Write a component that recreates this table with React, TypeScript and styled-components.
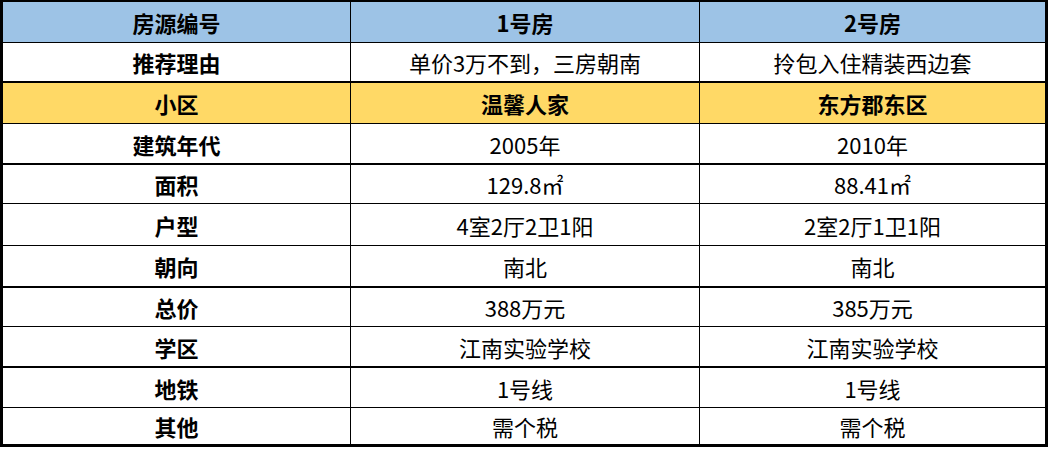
import * as React from "react";
import styled, { createGlobalStyle } from "styled-components";

type RowData = {
  cells: [string, string, string];
  height: number;
  line: number;
  tone?: "blue" | "yellow";
  bold?: boolean;
};

const rows: RowData[] = [
  { cells: ["房源编号", "1号房", "2号房"], height: 41, line: 1, tone: "blue", bold: true },
  { cells: ["推荐理由", "单价3万不到，三房朝南", "拎包入住精装西边套"], height: 40, line: 2 },
  { cells: ["小区", "温馨人家", "东方郡东区"], height: 41, line: 1, tone: "yellow", bold: true },
  { cells: ["建筑年代", "2005年", "2010年"], height: 41, line: 2 },
  { cells: ["面积", "129.8㎡", "88.41㎡"], height: 39, line: 1 },
  { cells: ["户型", "4室2厅2卫1阳", "2室2厅1卫1阳"], height: 42, line: 1 },
  { cells: ["朝向", "南北", "南北"], height: 42, line: 2 },
  { cells: ["总价", "388万元", "385万元"], height: 39, line: 1 },
  { cells: ["学区", "江南实验学校", "江南实验学校"], height: 41, line: 2 },
  { cells: ["地铁", "1号线", "1号线"], height: 40, line: 1 },
  { cells: ["其他", "需个税", "需个税"], height: 39, line: 3 },
];

const toneColors = {
  blue: "#9dc3e6",
  yellow: "#ffd966",
};

const GlobalStyle = createGlobalStyle`
  html, body {
    margin: 0;
    padding: 0;
    background: #fff;
  }
  body {
    font-family: "Noto Sans CJK SC", "Noto Sans", sans-serif;
    color: #000;
  }
`;

const Table = styled.div`
  width: 1048px;
  box-sizing: border-box;
  border-top: 2px solid #000;
  border-left: 3px solid #000;
  border-right: 3px solid #000;
  display: flex;
  flex-direction: column;
`;

const Row = styled.div<{ $height: number; $line: number; $tone?: "blue" | "yellow" }>`
  display: grid;
  grid-template-columns: 347px 349px 346px;
  height: ${(p) => p.$height}px;
  box-sizing: border-box;
  border-bottom: ${(p) => p.$line}px solid #000;
  background: ${(p) => (p.$tone ? toneColors[p.$tone] : "#fff")};
`;

const Cell = styled.div<{ $bold?: boolean }>`
  display: flex;
  align-items: center;
  justify-content: center;
  box-sizing: border-box;
  font-size: 22px;
  line-height: 1;
  font-weight: ${(p) => (p.$bold ? 700 : 400)};
  white-space: nowrap;
  & + & {
    border-left: 1px solid #000;
  }
`;

export default function App() {
  return (
    <>
      <GlobalStyle />
      <Table>
        {rows.map((row, idx) => (
          <Row
            key={"row-" + idx}
            $height={row.height}
            $line={row.line}
            $tone={row.tone}
          >
            {row.cells.map((text, col) => (
              <Cell key={text + col} $bold={col === 0 || row.bold}>
                {text}
              </Cell>
            ))}
          </Row>
        ))}
      </Table>
    </>
  );
}
